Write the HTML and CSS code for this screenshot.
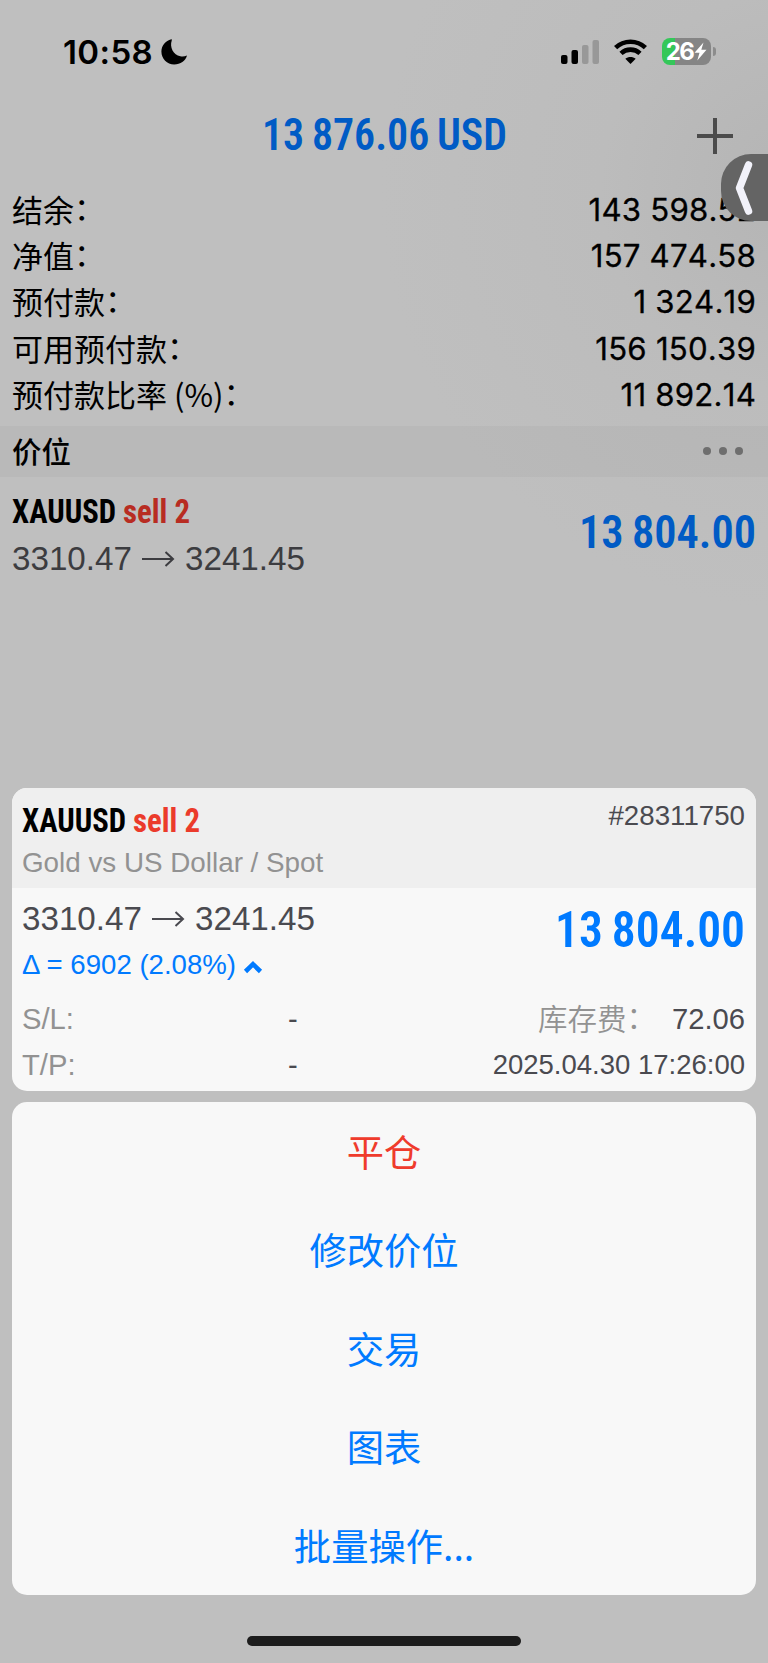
FILE: index.html
```html
<!DOCTYPE html>
<html lang="zh-CN">
<head>
    <meta charset="UTF-8">
    <meta name="viewport" content="width=device-width, initial-scale=1.0">
    <title>交易</title>
    <link rel="stylesheet" href="styles.css">
</head>
<body>
    <div class="screen">
        <div class="status-bar">
            <div class="clock">
                <span>10:58</span>
                <svg width="26" height="26" viewBox="0 0 26 26"><path d="M10.3 0.3C4.500 1.800 0.400 6.700 0.400 12.600C0.400 19.800 6 25.600 13.200 25.600C19.500 25.600 24.500 22 26 16.600C23.800 17.500 21.500 17.900 19.300 17.300C12.500 15.900 8.300 8.300 10.800 1.200C11 0.500 10.800 0.200 10.300 0.300Z"/></svg>
            </div>
            <div class="status-icons">
                <svg width="39" height="26" viewBox="0 0 39 26">
                    <rect x="0" y="16" width="6.500" height="9" rx="2"/>
                    <rect x="10.500" y="11" width="6.500" height="14" rx="2"/>
                    <rect x="21" y="6" width="6.500" height="19" rx="2" fill="#989898"/>
                    <rect x="31.500" y="1" width="6.500" height="24" rx="2" fill="#989898"/>
                </svg>
                <svg class="wifi" width="33" height="26" viewBox="0 0 33 26">
                    <path d="M1.600 8.600C10 0.700 23 0.700 31.400 8.600M7 14.400C12.400 9.400 20.600 9.400 26 14.400" fill="none" stroke="#000" stroke-width="4.600"/>
                    <path d="M16.500 25L11.300 19.800C14.300 17.300 18.700 17.300 21.700 19.800Z"/>
                </svg>
                <div class="battery">
                    <div class="battery-body">
                        <span>26</span>
                        <svg width="13" height="19" viewBox="0 0 13 19"><path d="M9.500 0.500L0.500 10.800H5.500L3.300 18.500L12.500 7.800H7.300Z" fill="#fff"/></svg>
                    </div>
                    <div class="battery-cap"></div>
                </div>
            </div>
        </div>

        <div class="title-bar">
            <svg class="condensed total" width="246" height="44"><text x="0" y="38" textLength="245" lengthAdjust="spacingAndGlyphs">13 876.06 USD</text></svg>
            <svg class="plus" width="36" height="36" viewBox="0 0 36 36"><path d="M18 0V36M0 18H36" stroke="#4b4b4b" stroke-width="4"/></svg>
        </div>

        <div class="account">
            <div class="account-row"><span>结余<i>：</i></span><b>143 598.52</b></div>
            <div class="account-row"><span>净值<i>：</i></span><b>157 474.58</b></div>
            <div class="account-row"><span>预付款<i>：</i></span><b>1 324.19</b></div>
            <div class="account-row"><span>可用预付款<i>：</i></span><b>156 150.39</b></div>
            <div class="account-row"><span>预付款比率 (%)<i>：</i></span><b>11 892.14</b></div>
        </div>

        <div class="section-bar">
            <span>价位</span>
            <div class="dots"><i></i><i></i><i></i></div>
        </div>

        <div class="position">
            <div>
                <svg class="condensed symbol" width="180" height="34">
                    <text x="0" y="29" textLength="104" lengthAdjust="spacingAndGlyphs">XAUUSD</text>
                    <text class="sell" x="111" y="29" textLength="67" lengthAdjust="spacingAndGlyphs">sell 2</text>
                </svg>
                <div class="prices">
                    <span>3310.47</span>
                    <svg width="32" height="16" viewBox="0 0 32 16"><path d="M0 8H31M23.500 1L31 8L23.500 15" fill="none" stroke="currentColor" stroke-width="2"/></svg>
                    <span>3241.45</span>
                </div>
            </div>
            <svg class="condensed profit" width="177" height="46"><text x="0" y="40" textLength="177" lengthAdjust="spacingAndGlyphs">13 804.00</text></svg>
        </div>

        <div class="sheet">
            <div class="card detail">
                <div class="detail-head">
                    <div>
                        <svg class="condensed symbol" width="180" height="34">
                            <text x="0" y="29" textLength="104" lengthAdjust="spacingAndGlyphs">XAUUSD</text>
                            <text class="sell" x="111" y="29" textLength="67" lengthAdjust="spacingAndGlyphs">sell 2</text>
                        </svg>
                        <div class="description">Gold vs US Dollar / Spot</div>
                    </div>
                    <div class="ticket">#28311750</div>
                </div>
                <div class="detail-body">
                    <div class="detail-main">
                        <div>
                            <div class="prices">
                                <span>3310.47</span>
                                <svg width="32" height="16" viewBox="0 0 32 16"><path d="M0 8H31M23.500 1L31 8L23.500 15" fill="none" stroke="currentColor" stroke-width="2"/></svg>
                                <span>3241.45</span>
                            </div>
                            <div class="delta">
                                <span>Δ = 6902 (2.08%)</span>
                                <svg width="18" height="12" viewBox="0 0 18 12"><path d="M1.500 10.500L9 3.200L16.500 10.500" fill="none" stroke="currentColor" stroke-width="4.600"/></svg>
                            </div>
                        </div>
                        <svg class="condensed profit-large" width="190" height="48"><text x="0" y="42" textLength="190" lengthAdjust="spacingAndGlyphs">13 804.00</text></svg>
                    </div>
                    <div class="detail-row">
                        <span class="label">S/L:</span>
                        <span class="dash">-</span>
                        <span class="label swap">库存费<i>：</i></span>
                        <span class="value">72.06</span>
                    </div>
                    <div class="detail-row">
                        <span class="label">T/P:</span>
                        <span class="dash">-</span>
                        <span class="value date">2025.04.30 17:26:00</span>
                    </div>
                </div>
            </div>

            <div class="card menu">
                <a class="close">平仓</a>
                <a>修改价位</a>
                <a>交易</a>
                <a>图表</a>
                <a>批量操作<span>...</span></a>
            </div>
        </div>

        <div class="home-indicator"></div>

        <div class="side-tab">
            <svg width="20" height="54" viewBox="0 0 20 54"><path d="M16.500 4L7.500 27L16.500 50" fill="none" stroke="#f2f2fa" stroke-width="7.500" stroke-linecap="round" stroke-linejoin="round"/></svg>
        </div>
    </div>
</body>
</html>
```

FILE: styles.css
```css
* {
    box-sizing: border-box;
}

body {
    margin: 0;
    font-family: "Liberation Sans", "Noto Sans CJK SC", sans-serif;
    color: #000;
}

svg {
    display: block;
    flex: none;
    overflow: visible;
}

i {
    font-style: normal;
}

.screen {
    position: relative;
    width: 768px;
    height: 1663px;
    display: flex;
    flex-direction: column;
    overflow: hidden;
    background: radial-gradient(circle at 800px 190px, #b4b4b4 0, #bcbcbc 200px, #bfbfbf 420px);
}

/* Status bar */
.status-bar {
    height: 104px;
    padding: 0 52px 1px 63px;
    display: flex;
    justify-content: space-between;
    align-items: center;
}

.clock {
    display: flex;
    align-items: center;
    gap: 8px;
    font: 600 33px/40px Inter, sans-serif;
    letter-spacing: 0.400px;
}

.status-icons {
    display: flex;
    align-items: center;
}

.wifi {
    margin: 0 15px 0 14px;
}

.battery {
    display: flex;
    align-items: center;
    gap: 2px;
}

.battery-body {
    width: 49px;
    height: 27px;
    border-radius: 8px;
    display: flex;
    align-items: center;
    justify-content: center;
    background: linear-gradient(to right, #34c759 13.500px, #858585 13.500px);
    color: #fff;
    font: 700 24px/27px Inter, sans-serif;
    letter-spacing: -1.500px;
}

.battery-body svg {
    margin-left: 1px;
}

.battery-cap {
    width: 3px;
    height: 9px;
    border-radius: 0 4px 4px 0;
    background: #8c8c8c;
}

/* Narrow bold headings and amounts */
.condensed {
    font-family: Roboto, sans-serif;
    font-weight: 600;
    font-stretch: 75%;
    word-spacing: -2px;
}

.title-bar {
    height: 85px;
    padding: 8px 35px 0 262px;
    display: flex;
    justify-content: space-between;
    align-items: flex-start;
}

.total {
    font-size: 43.500px;
    fill: #005bc5;
}

.plus {
    margin-top: 6px;
}

/* Account summary */
.account {
    height: 236.500px;
}

.account-row {
    height: 46.200px;
    padding: 0 12px;
    display: flex;
    justify-content: space-between;
    align-items: flex-start;
    font: 400 31px/40px "Noto Sans CJK SC", sans-serif;
}

.account-row i,
.swap i {
    position: relative;
    top: -2px;
}

.account-row b {
    padding-top: 1px;
    font: 400 31.200px/40px Inter, sans-serif;
    font-kerning: none;
    letter-spacing: 0.200px;
    -webkit-text-stroke: 0.300px #000;
}

.section-bar {
    height: 51.500px;
    padding: 0 25px 0 12px;
    display: flex;
    justify-content: space-between;
    align-items: center;
    background: rgba(0, 0, 0, 0.030);
    font: 500 29.500px/40px "Noto Sans CJK SC", sans-serif;
}

.section-bar span {
    margin-top: -3px;
}

.dots {
    display: flex;
    gap: 8px;
}

.dots i {
    width: 8px;
    height: 8px;
    border-radius: 50%;
    background: #6e6e6e;
}

/* Open position */
.position {
    padding: 17px 12px 0 12px;
    display: flex;
    justify-content: space-between;
    align-items: flex-start;
}

.symbol {
    font-size: 34px;
    font-weight: 700;
    word-spacing: 0;
}

.position .sell {
    fill: #b82c22;
}

.prices {
    display: flex;
    align-items: center;
    font-size: 33.200px;
    line-height: 40px;
    color: #4a4a50;
}

.position .prices {
    margin-top: 11px;
    color: #3c3c40;
}

.prices svg {
    margin: 0 11px 0 10px;
}

.profit {
    margin-top: 14px;
    font-size: 46px;
    fill: #005bc5;
}

/* Bottom sheet */
.sheet {
    margin: auto 12px 0 12px;
    display: flex;
    flex-direction: column;
    gap: 11px;
}

.card {
    border-radius: 15px;
    overflow: hidden;
    background: #f8f8f8;
}

.detail {
    height: 303.500px;
}

.detail-head {
    height: 100.500px;
    padding: 15px 11px 0 10px;
    display: flex;
    justify-content: space-between;
    background: #efefef;
}

.detail-head .sell {
    fill: #eb3b2b;
}

.description {
    margin-top: 9px;
    font-size: 27.800px;
    line-height: 34px;
    color: #929292;
}

.ticket {
    margin-top: -4px;
    font-size: 27.700px;
    line-height: 34px;
    color: #4a4a50;
}

.detail-body {
    padding: 11px 11px 0 10px;
}

.detail-main {
    height: 98px;
    display: flex;
    justify-content: space-between;
    align-items: flex-start;
}

.delta {
    display: flex;
    align-items: center;
    gap: 8px;
    margin-top: 8px;
    font-size: 27.600px;
    line-height: 36px;
    color: #007aff;
}

.delta svg {
    margin-top: 3px;
}

.profit-large {
    margin-top: 6px;
    font-size: 49.500px;
    fill: #007aff;
}

.detail-row {
    height: 45.500px;
    display: flex;
    align-items: center;
    font-size: 29.200px;
    color: #4a4a50;
}

.label {
    width: 266px;
    color: #929292;
}

.swap {
    width: 117px;
    margin: -6px 17px 0 auto;
    white-space: nowrap;
    font: 350 29.500px/40px "Noto Sans CJK SC", sans-serif;
}

.value {
    width: 73px;
    text-align: right;
}

.date {
    width: auto;
    margin-left: auto;
    font-size: 27.500px;
}

.menu {
    height: 492.500px;
}

.menu a {
    height: 98.500px;
    padding-bottom: 1px;
    display: flex;
    align-items: center;
    justify-content: center;
    color: #007aff;
    font: 400 37.300px/50px "Noto Sans CJK SC", sans-serif;
}

.menu .close {
    color: #ef3b2c;
}

.home-indicator {
    width: 274px;
    height: 10px;
    margin: 41.500px auto 17px 247px;
    border-radius: 5px;
    background: #1c1c1c;
}

/* Floating handle over the right edge */
.side-tab {
    position: absolute;
    top: 153.500px;
    right: 0;
    width: 47px;
    height: 67px;
    padding: 7px 0 0 11px;
    border-radius: 30px 0 0 30px;
    background: #646464;
}
```
